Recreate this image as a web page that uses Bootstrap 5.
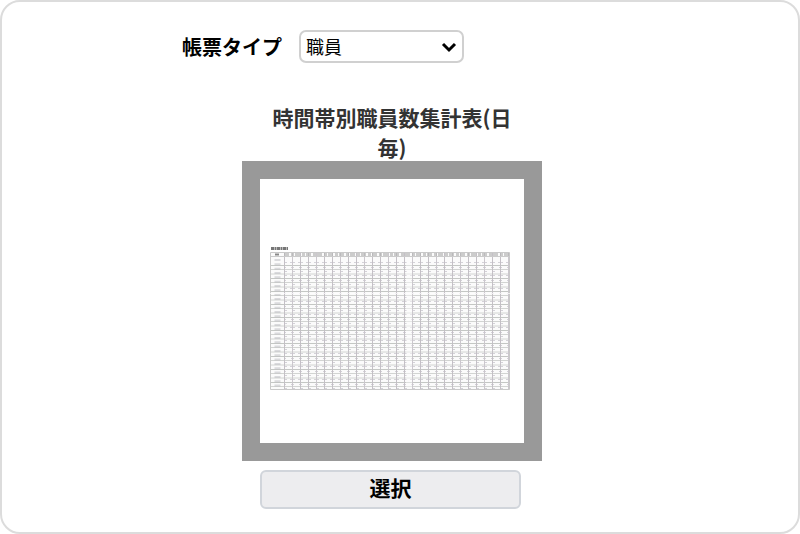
<!DOCTYPE html>
<html lang="ja">
<head>
<meta charset="utf-8">
<meta name="viewport" content="width=device-width, initial-scale=1">
<title>帳票タイプ</title>
<link href="https://cdn.jsdelivr.net/npm/bootstrap@5.3.0/dist/css/bootstrap.min.css" rel="stylesheet">
<style>
body { font-family: "Noto Sans CJK JP", sans-serif; color: #000; background: #fff; }
.panel { border: 2px solid #dcdcdc; border-radius: 20px; padding: 28px 16px 16px 0; }
.panel-body { max-width: 420px; }
.type-label { font-size: 20px; line-height: 32px; }
.type-select { width: 165px; height: 33px; margin-left: 17px; padding: 0 24px 0 5px; border: 2px solid #d0d0d0; border-radius: 7px; color: #000; font-size: 18px; line-height: 29px; background-position: right 5px center; background-size: 16px 16px;
  background-image: url("data:image/svg+xml,%3Csvg xmlns='http://www.w3.org/2000/svg' viewBox='0 0 16 16'%3E%3Cpath d='M2 5l6 6 6-6' fill='none' stroke='%23000' stroke-width='3'/%3E%3C/svg%3E"); }
.report { max-width: 300px; margin-top: 39px; }
.report-title { font-size: 21px; line-height: 30px; color: #333; padding: 0 19px; margin: 0; }
.preview { border: 18px solid #999; margin-top: -1px; }
.select-btn { width: 261px; height: 39px; padding: 0 0 4px; margin: 9px 0 0 18px; border: 2px solid #d1d5db; border-radius: 6px; background: #ededef; color: #000; font-size: 21px; line-height: 31px; }
.select-btn:hover { background: #e2e2e5; border-color: #c5c9d0; }
</style>
<script src="https://cdn.jsdelivr.net/npm/bootstrap@5.3.0/dist/js/bootstrap.bundle.min.js" defer></script>
</head>
<body>
<main class="panel min-vh-100">
  <div class="panel-body mx-auto">
    <div class="d-flex align-items-center">
      <label class="type-label fw-bold text-nowrap" for="report-type">帳票タイプ</label>
      <select class="form-select type-select" id="report-type"><option selected>職員</option></select>
    </div>
    <section class="report mx-auto">
      <h1 class="report-title fw-bold text-center">時間帯別職員数集計表(日毎)</h1>
      <div class="preview">
        <svg class="d-block w-100" viewBox="0 0 264 264" role="img" aria-label="時間帯別職員数集計表のプレビュー">
          <defs>
            <pattern id="cols" x="24" y="73" width="24" height="138" patternUnits="userSpaceOnUse">
              <path d="M.5 0v138M16.5 0v138" stroke="#c4c0c6"/>
              <path d="M8.500 0v138" stroke="#cbc7cd"/>
            </pattern>
            <pattern id="lines" x="10" y="86" width="240" height="13" patternUnits="userSpaceOnUse">
              <path d="M0 .5h240" stroke="#c4c7c4"/>
              <path d="M0 4.500h240M0 9h240" stroke="#d2d4d2"/>
            </pattern>
            <pattern id="digits" x="24" y="81" width="8" height="13" patternUnits="userSpaceOnUse">
              <path d="M0 2.500h3M6 2.500h2M0 7.500h2M7 7.500h1M0 11.500h3" stroke="#d4d2d8"/>
            </pattern>
          </defs>
          <rect x="10" y="73" width="240" height="138" fill="#fbfbfb"/>
          <rect x="24" y="83" width="226" height="127" fill="url(#digits)"/>
          <rect x="10" y="86" width="240" height="124" fill="url(#lines)"/>
          <rect x="24" y="73" width="226" height="138" fill="url(#cols)"/>
          <path d="M24 75.500h226" stroke="#b4b4b4" stroke-width="3" stroke-dasharray="5 2 3 1" opacity=".65"/>
          <path d="M10 77.500h240" stroke="#cbcbcb"/>
          <path d="M15 75.500h4" stroke="#888" stroke-width="2"/>
          <path d="M17.500 80v128" stroke="#b4b4ba" stroke-width="6" stroke-dasharray="2 2.330" opacity=".45"/>
          <path d="M10.500 73.500h239v137h-239z" fill="none" stroke="#c9c9c9"/>
          <path d="M149 79v130" stroke="#fff" stroke-width="6" opacity=".45"/>
          <path d="M10 114.500h240" stroke="#fff" opacity=".7"/>
          <path d="M11 69.500h17" stroke="#555" stroke-width="3" stroke-dasharray="3 .5 2 .5" opacity=".8"/>
        </svg>
      </div>
      <button type="button" class="btn select-btn fw-bold">選択</button>
    </section>
  </div>
</main>
</body>
</html>
